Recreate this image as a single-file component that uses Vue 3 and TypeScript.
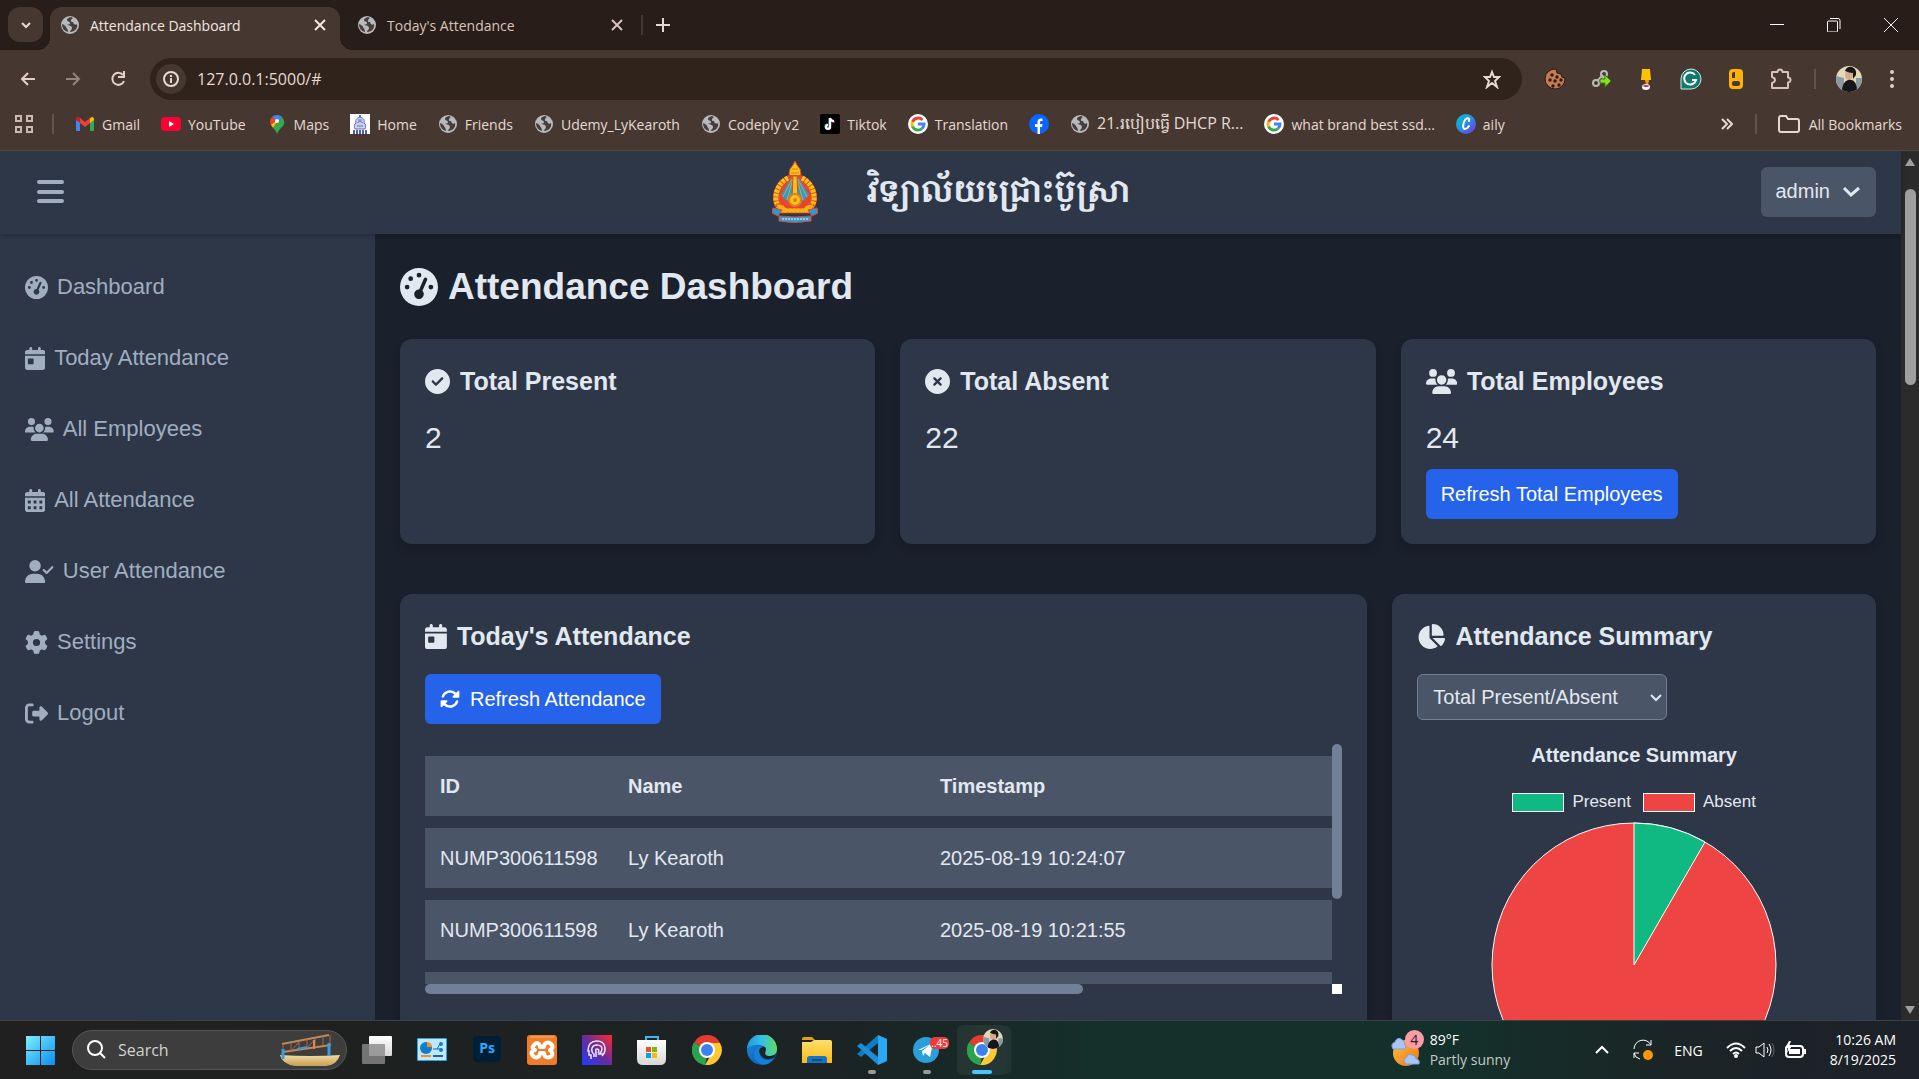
<script setup lang="ts">
import { computed, ref } from 'vue'

interface Glyph { w: number; d: string }
interface Bookmark { icon: string; label: string; lang?: string }
interface AttendanceRow { id: string; name: string; timestamp: string }

const calendarTop = 'M128 0c17.7 0 32 14.3 32 32V64H288V32c0-17.7 14.3-32 32-32s32 14.3 32 32V64h48c26.5 0 48 21.5 48 48v48H0V112C0 85.5 21.5 64 48 64H96V32c0-17.7 14.3-32 32-32z'
const disc = 'M256 512A256 256 0 1 0 256 0a256 256 0 1 0 0 512z'

const glyphs: Record<string, Glyph> = {
  gauge: { w: 512, d: 'M0 256a256 256 0 1 1 512 0A256 256 0 1 1 0 256zM288 96a32 32 0 1 0 -64 0 32 32 0 1 0 64 0zM256 416c35.3 0 64-28.7 64-64c0-17.4-6.9-33.1-18.1-44.6L366 161.7c5.3-12.1-.2-26.3-12.3-31.6s-26.3 .2-31.6 12.3L257.9 288c-.6 0-1.3 0-1.9 0c-35.3 0-64 28.7-64 64s28.7 64 64 64zM176 144a32 32 0 1 0 -64 0 32 32 0 1 0 64 0zM96 288a32 32 0 1 0 0-64 32 32 0 1 0 0 64zm352-32a32 32 0 1 0 -64 0 32 32 0 1 0 64 0z' },
  day: { w: 448, d: calendarTop + 'M0 192H448V464c0 26.5-21.5 48-48 48H48c-26.5 0-48-21.5-48-48V192zm80 64c-8.8 0-16 7.2-16 16v96c0 8.8 7.2 16 16 16h96c8.8 0 16-7.2 16-16V272c0-8.8-7.2-16-16-16H80z' },
  days: { w: 448, d: calendarTop + 'M0 192H448V464c0 26.5-21.5 48-48 48H48c-26.5 0-48-21.5-48-48V192zM64 256v64h64v-64zM192 256v64h64v-64zM320 256v64h64v-64zM64 384v64h64v-64zM192 384v64h64v-64zM320 384v64h64v-64z' },
  users: { w: 640, d: 'M144 0a80 80 0 1 1 0 160A80 80 0 1 1 144 0zM512 0a80 80 0 1 1 0 160A80 80 0 1 1 512 0zM0 298.7C0 239.8 47.8 192 106.7 192h42.7c15.9 0 31 3.5 44.6 9.7c-1.3 7.2-1.9 14.7-1.9 22.3c0 38.2 16.8 72.5 43.3 96c-.2 0-.4 0-.7 0H21.3C9.6 320 0 310.4 0 298.7zM405.3 320c-.2 0-.4 0-.7 0c26.6-23.5 43.3-57.8 43.3-96c0-7.6-.7-15-1.9-22.3c13.6-6.3 28.7-9.7 44.6-9.7h42.7C592.2 192 640 239.8 640 298.7c0 11.8-9.6 21.3-21.3 21.3H405.3zM224 224a96 96 0 1 1 192 0 96 96 0 1 1 -192 0zM128 485.3C128 411.7 187.7 352 261.3 352H378.7C452.3 352 512 411.7 512 485.3c0 14.7-11.9 26.7-26.7 26.7H154.7c-14.7 0-26.7-11.9-26.7-26.7z' },
  userCheck: { w: 640, d: 'M96 128a128 128 0 1 1 256 0A128 128 0 1 1 96 128zM0 482.3C0 383.8 79.8 304 178.3 304h91.4C368.2 304 448 383.8 448 482.3c0 16.4-13.3 29.7-29.7 29.7H29.7C13.3 512 0 498.7 0 482.3zM625 177L497 305c-9.4 9.4-24.6 9.4-33.9 0l-64-64c-9.4-9.4-9.4-24.6 0-33.9s24.6-9.4 33.9 0l47 47L591 143c9.4-9.4 24.6-9.4 33.9 0s9.4 24.6 0 33.9z' },
  gear: { w: 512, d: 'M495.9 166.6c3.2 8.7 .5 18.4-6.4 24.6l-43.3 39.4c1.1 8.3 1.7 16.8 1.7 25.4s-.6 17.1-1.7 25.4l43.3 39.4c6.9 6.2 9.6 15.9 6.4 24.6c-4.4 11.9-9.7 23.3-15.8 34.3l-4.7 8.1c-6.6 11-14 21.4-22.1 31.2c-5.9 7.2-15.7 9.6-24.5 6.8l-55.7-17.7c-13.4 10.3-28.2 18.9-44 25.4l-12.5 57.1c-2 9.1-9 16.3-18.2 17.8c-13.8 2.3-28 3.5-42.5 3.5s-28.7-1.2-42.5-3.5c-9.2-1.5-16.2-8.7-18.2-17.8l-12.5-57.1c-15.8-6.5-30.6-15.1-44-25.4L83.1 425.9c-8.8 2.8-18.6 .3-24.5-6.8c-8.1-9.8-15.5-20.2-22.1-31.2l-4.7-8.1c-6.1-11-11.4-22.4-15.8-34.3c-3.2-8.7-.5-18.4 6.4-24.6l43.3-39.4C64.6 273.1 64 264.6 64 256s.6-17.1 1.7-25.4L22.4 191.2c-6.9-6.2-9.6-15.9-6.4-24.6c4.4-11.9 9.7-23.3 15.8-34.3l4.7-8.1c6.6-11 14-21.4 22.1-31.2c5.9-7.2 15.7-9.6 24.5-6.8l55.7 17.7c13.4-10.3 28.2-18.9 44-25.4l12.5-57.1c2-9.1 9-16.3 18.2-17.8C227.3 1.2 241.5 0 256 0s28.7 1.2 42.5 3.5c9.2 1.5 16.2 8.7 18.2 17.8l12.5 57.1c15.8 6.5 30.6 15.1 44 25.4l55.7-17.7c8.8-2.8 18.6-.3 24.5 6.8c8.1 9.8 15.5 20.2 22.1 31.2l4.7 8.1c6.1 11 11.4 22.4 15.8 34.3zM256 336a80 80 0 1 0 0-160 80 80 0 1 0 0 160z' },
  logout: { w: 512, d: 'M377.9 105.9L500.7 228.7c7.2 7.2 11.3 17.1 11.3 27.3s-4.1 20.1-11.3 27.3L377.9 406.1c-6.4 6.4-15 9.9-24 9.9c-18.7 0-33.9-15.2-33.9-33.9l0-62.1-128 0c-17.7 0-32-14.3-32-32l0-64c0-17.7 14.3-32 32-32l128 0 0-62.1c0-18.7 15.2-33.9 33.9-33.9c9 0 17.6 3.6 24 9.9zM160 96L96 96c-17.7 0-32 14.3-32 32l0 256c0 17.7 14.3 32 32 32l64 0c17.7 0 32 14.3 32 32s-14.3 32-32 32l-64 0c-53 0-96-43-96-96L0 128C0 75 43 32 96 32l64 0c17.7 0 32 14.3 32 32s-14.3 32-32 32z' },
  check: { w: 512, d: disc + 'M369 209L241 337c-9.4 9.4-24.6 9.4-33.9 0l-64-64c-9.4-9.4-9.4-24.6 0-33.9s24.6-9.4 33.9 0l47 47L335 175c9.4-9.4 24.6-9.4 33.9 0s9.4 24.6 0 33.9z' },
  cross: { w: 512, d: disc + 'M175 175c9.4-9.4 24.6-9.4 33.9 0l47 47 47-47c9.4-9.4 24.6-9.4 33.9 0s9.4 24.6 0 33.9l-47 47 47 47c9.4 9.4 9.4 24.6 0 33.9s-24.6 9.4-33.9 0l-47-47-47 47c-9.4 9.4-24.6 9.4-33.9 0s-9.4-24.6 0-33.9l47-47-47-47c-9.4-9.4-9.4-24.6 0-33.9z' },
  pie: { w: 576, d: 'M304 240V16.6c0-9 7-16.6 16-16.6C443.7 0 544 100.3 544 224c0 9-7.6 16-16.6 16H304zM32 272C32 150.7 122.1 50.3 239 34.3c9.2-1.3 17 6.1 17 15.4V288L412.5 444.5c6.7 6.7 6.2 17.7-1.5 23.1C371.8 495.6 323.8 512 272 512C139.5 512 32 404.6 32 272zm526.4 16c9.3 0 16.6 7.8 15.4 17c-7.7 55.9-34.6 105.6-73.9 142.3c-6 5.6-15.4 5.2-21.2-.7L320 288H558.4z' },
  rotate: { w: 512, d: 'M142.9 142.9c-17.5 17.5-30.1 38-37.8 59.8c-5.9 16.7-24.2 25.4-40.8 19.5s-25.4-24.2-19.5-40.8C55.6 150.7 73.2 122 97.6 97.6c87.2-87.2 228.3-87.5 315.8-1L455 55c6.9-6.9 17.2-8.9 26.2-5.2s14.8 12.5 14.8 22.2l0 128c0 13.3-10.7 24-24 24L344 224c-9.7 0-18.5-5.8-22.2-14.8s-1.7-19.3 5.2-26.2l41.1-41.1c-62.6-61.5-163.1-61.2-225.3 1zM16 312c0-13.3 10.7-24 24-24L168 288c9.7 0 18.5 5.8 22.2 14.8s1.7 19.3-5.2 26.2l-41.1 41.1c62.6 61.5 163.1 61.2 225.3-1c17.5-17.5 30.1-38 37.8-59.8c5.9-16.7 24.2-25.4 40.8-19.5s25.4 24.2 19.5 40.8c-10.8 30.6-28.4 59.3-52.9 83.8c-87.2 87.2-228.3 87.5-315.8 1L57 457c-6.9 6.9-17.2 8.9-26.2 5.2S16 449.7 16 440z' },
}

const navItems = [
  { icon: 'gauge', label: 'Dashboard' },
  { icon: 'day', label: 'Today Attendance' },
  { icon: 'users', label: 'All Employees' },
  { icon: 'days', label: 'All Attendance' },
  { icon: 'userCheck', label: 'User Attendance' },
  { icon: 'gear', label: 'Settings' },
  { icon: 'logout', label: 'Logout' },
]

const present = ref(2)
const absent = ref(22)
const total = computed(() => present.value + absent.value)
const summaryMode = ref('total')
const search = ref('')
const address = ref('127.0.0.1:5000/#')

const stats = computed(() => [
  { icon: 'check', label: 'Total Present', value: present.value, action: '' },
  { icon: 'cross', label: 'Total Absent', value: absent.value, action: '' },
  { icon: 'users', label: 'Total Employees', value: total.value, action: 'Refresh Total Employees' },
])

const rows: AttendanceRow[] = [
  { id: 'NUMP300611598', name: 'Ly Kearoth', timestamp: '2025-08-19 10:24:07' },
  { id: 'NUMP300611598', name: 'Ly Kearoth', timestamp: '2025-08-19 10:21:55' },
]

const bookmarks: Bookmark[] = [
  { icon: 'gmail', label: 'Gmail' },
  { icon: 'youtube', label: 'YouTube' },
  { icon: 'maps', label: 'Maps' },
  { icon: 'home', label: 'Home' },
  { icon: 'globe', label: 'Friends' },
  { icon: 'globe', label: 'Udemy_LyKearoth' },
  { icon: 'globe', label: 'Codeply v2' },
  { icon: 'tiktok', label: 'Tiktok' },
  { icon: 'google', label: 'Translation' },
  { icon: 'facebook', label: '' },
  { icon: 'globe', label: '21.របៀបធ្វើ DHCP R...', lang: 'km' },
  { icon: 'google', label: 'what brand best ssd...' },
  { icon: 'canva', label: 'aily' },
]

const extensions = ['cookie', 'chain', 'highlighter', 'grammar', 'mouse', 'puzzle']
const apps = ['taskview', 'panel', 'photoshop', 'xampp', 'face', 'store', 'chrome', 'edge', 'folder', 'vscode', 'telegram', 'profile']
const running = ['vscode', 'telegram']

const radius = 142
const slice = computed(() => {
  const angle = (present.value / total.value) * Math.PI * 2
  const x = 143 + radius * Math.sin(angle)
  const y = 143 - radius * Math.cos(angle)
  return `M143 143V${143 - radius}A${radius} ${radius} 0 0 1 ${x} ${y}Z`
})
</script>

<template>
  <div class="screen">
    <svg class="sprite" width="0" height="0" aria-hidden="true">
      <defs>
        <linearGradient id="canvaFill" x1="0" y1="0" x2="1" y2="1"><stop offset="0" stop-color="#00c4cc" /><stop offset=".5" stop-color="#2a8fe0" /><stop offset="1" stop-color="#7d2ae8" /></linearGradient>
        <linearGradient id="winFill" gradientUnits="userSpaceOnUse" x1="0" y1="0" x2="29" y2="29"><stop offset="0" stop-color="#7df0ff" /><stop offset="1" stop-color="#0a8cf0" /></linearGradient>
        <linearGradient id="faceFill" x1="0" y1="1" x2="1" y2="0"><stop offset="0" stop-color="#1c3cff" /><stop offset=".5" stop-color="#6a2c9c" /><stop offset="1" stop-color="#ff2a2a" /></linearGradient>
        <linearGradient id="edgeTop" x1="0" y1="0" x2="1" y2="0"><stop offset="0" stop-color="#1f9bdc" /><stop offset=".5" stop-color="#35c1e8" /><stop offset="1" stop-color="#5fdc5a" /></linearGradient>
        <linearGradient id="edgeLow" x1="0" y1="0" x2="1" y2="1"><stop offset="0" stop-color="#1b8ee0" /><stop offset="1" stop-color="#0c4c9e" /></linearGradient>
        <linearGradient id="folderFill" x1="0" y1="0" x2="0" y2="1"><stop offset="0" stop-color="#ffdf6b" /><stop offset="1" stop-color="#fcb914" /></linearGradient>
        <linearGradient id="sunFill" x1="0" y1="0" x2="1" y2="1"><stop offset="0" stop-color="#ffc53d" /><stop offset="1" stop-color="#f0701a" /></linearGradient>
        <linearGradient id="whiteFill" x1="0" y1="0" x2="0" y2="1"><stop offset="0" stop-color="#ffffff" /><stop offset="1" stop-color="#d8d8d8" /></linearGradient>
        <linearGradient id="sandFill" x1="0" y1="0" x2="0" y2="1"><stop offset="0" stop-color="#f1dca2" /><stop offset="1" stop-color="#c79f55" /></linearGradient>
      </defs>
      <symbol id="globe" viewBox="0 0 20 20"><circle cx="10" cy="10" r="9" fill="#b4bac0" /><path d="M11 2c-2 1-4 1-4 3s3 1 3 3-2 1-3 2c2 0 5 1 5 3s-2 2-2 4c5 0 8-4 7-8-1 1-2 1-3 0s0-2-2-2-1-3 1-4z" fill="#4a3d38" /><path d="M2 9c2 1 3 1 4 3s2 2 2 5c-4-1-6-4-6-8z" fill="#4a3d38" /></symbol>
      <symbol id="gmail" viewBox="0 0 20 20"><path d="M1 5v11q0 1 1 1h3V8z" fill="#4285f4" /><path d="M19 5v11q0 1-1 1h-3V8z" fill="#34a853" /><path d="M15 4v5l4-3V5q0-2-2-2z" fill="#fbbc04" /><path d="M5 4v5L1 6V5q0-2 2-2z" fill="#c5221f" /><path d="M5 4l5 4 5-4v5l-5 4-5-4z" fill="#ea4335" /></symbol>
      <symbol id="youtube" viewBox="0 0 20 20"><rect y="3" width="20" height="14" rx="4" fill="#ff0033" /><path d="M8 7l5 3-5 3z" fill="#fff" /></symbol>
      <symbol id="maps" viewBox="0 0 20 20"><path d="M10 1a7 7 0 0 0-5 2l5 6 5-6a7 7 0 0 0-5-2z" fill="#4285f4" /><path d="M5 3a7 7 0 0 0-1 8l6-4z" fill="#ea4335" /><path d="M4 11l2 3 6-8-2 0z" fill="#fbbc04" /><path d="M15 3q4 5 1 9c-3 3-4 4-6 8-1-3-2-4-4-6z" fill="#34a853" /><circle cx="10" cy="7" r="2" fill="#fff" /></symbol>
      <symbol id="home" viewBox="0 0 20 20"><rect width="20" height="20" fill="#fff" /><path d="M10 1v3" stroke="#6470b8" stroke-width="2" /><path d="M10 3c4 1 5 4 4 6 2 1 2 4 1 6H5c-1-2-1-5 1-6-1-2 0-5 4-6z" fill="#cdd2ee" stroke="#6470b8" /><path d="M8 6h4M7 9l3-2 3 2M7 12h6" fill="none" stroke="#6470b8" /><path d="M3 17h14M3 19h14" stroke="#4d5bb0" stroke-dasharray="2 1" stroke-width="2" /></symbol>
      <symbol id="tiktok" viewBox="0 0 20 20"><rect width="20" height="20" rx="2" fill="#000" /><path d="M10.500 4.500v8.500a2 2 0 1 1-2-2M10.500 5q1 3 4 3" fill="none" stroke="#fe2c55" stroke-width="2" /><path d="M9.500 4v8.500a2 2 0 1 1-2-2M9.500 4q1 3 4 3" fill="none" stroke="#25f4ee" stroke-width="2" /><path d="M10 4v9a2 2 0 1 1-2-2M10 4q1 3 4 3" fill="none" stroke="#fff" stroke-width="2" /></symbol>
      <symbol id="google" viewBox="0 0 20 20"><circle cx="10" cy="10" r="10" fill="#fff" /><g fill="none" stroke-width="3"><path d="M14.500 6a6 6 0 0 0-10 2" stroke="#ea4335" /><path d="M4.500 7.500a6 6 0 0 0 0 5" stroke="#fbbc04" /><path d="M4.500 12.500a6 6 0 0 0 9.500 2" stroke="#34a853" /><path d="M10 10h6a6 6 0 0 1-2 4.500" stroke="#4285f4" /></g></symbol>
      <symbol id="facebook" viewBox="0 0 20 20"><circle cx="10" cy="10" r="10" fill="#0866ff" /><path d="M8.500 20v-7H6v-3h2.500V8c0-3 2-4 5-3.500V7H12q-1 0-1 1v2h2.500l-.5 3h-2v7z" fill="#fff" /></symbol>
      <symbol id="canva" viewBox="0 0 20 20"><circle cx="10" cy="10" r="10" fill="url(#canvaFill)" /><path d="M13 7c1-3-2-4-4-1s-3 9 0 9q2 0 4-3" fill="none" stroke="#fff" stroke-width="2" stroke-linecap="round" /></symbol>
      <symbol id="cookie" viewBox="0 0 24 24"><path d="M12 2a10 10 0 1 0 9 9l-3-1-1-3-4-1z" fill="#c67c4e" stroke="#2a1a14" /><g fill="#2a1a14"><circle cx="8" cy="8" r="1.700" /><circle cx="13" cy="10" r="1.700" /><circle cx="6" cy="13" r="1.700" /><circle cx="11" cy="14" r="1.700" /><circle cx="17" cy="13" r="1.700" /><circle cx="9" cy="19" r="1.700" /><circle cx="15" cy="18" r="1.700" /></g></symbol>
      <symbol id="chain" viewBox="0 0 24 24"><g fill="none" stroke="#b9b9b9" stroke-width="2"><circle cx="7" cy="16" r="3" /><circle cx="15" cy="7" r="3" /><path d="M9 13l5-5M12 16l3-6" /></g><path d="M11 12h5V8l6 6-6 6v-4h-5z" fill="#86e01e" stroke="#3f7a0a" /></symbol>
      <symbol id="highlighter" viewBox="0 0 24 24"><path d="M8 2h8l1 11H7z" fill="#ffc107" /><path d="M11 13h4l-1 5h-2z" fill="#e8a400" /><ellipse cx="12" cy="20" rx="4" ry="3" fill="#fff" /><ellipse cx="12" cy="19" rx="3" ry="1" fill="#e8175d" /></symbol>
      <symbol id="grammar" viewBox="0 0 24 24"><path d="M2 22V12a10 10 0 1 1 10 10z" fill="#0f7a6c" stroke="#cfe8e4" /><path d="M16 8a6 6 0 1 0 1 5h-4" fill="none" stroke="#fff" stroke-width="2" /></symbol>
      <symbol id="mouse" viewBox="0 0 24 24"><rect x="5" y="2" width="14" height="20" rx="4" fill="#ffb300" /><rect x="8" y="14" width="8" height="5" rx="2" fill="#463831" /><path d="M8 7q0-2 2-2h1v6H8z" fill="#463831" /></symbol>
      <symbol id="puzzle" viewBox="0 0 24 24"><path d="M3 5h5.500a2.500 2.500 0 0 1 5 0H19v5.500a2.500 2.500 0 0 1 0 5V21H3v-5q3-1 3-3t-3-3z" fill="none" stroke="#d8c2b8" stroke-width="2" stroke-linejoin="round" /></symbol>
      <symbol id="avatar" viewBox="0 0 26 26"><clipPath id="avatarClip"><circle cx="13" cy="13" r="13" /></clipPath><g clip-path="url(#avatarClip)"><rect width="26" height="26" fill="#e2d8b6" /><path d="M0 10l8 2v14H0zM20 12h6v14h-6z" fill="#8b99a3" /><ellipse cx="13" cy="9" rx="4" ry="5" fill="#d7a98b" /><path d="M9 5q2-5 7-4 5 2 4 8l-3 4V7q-4 0-8-2z" fill="#17181b" /><path d="M6 26q0-10 6-12 9-2 9 12z" fill="#15161b" /></g></symbol>
      <symbol id="taskview" viewBox="0 0 30 30"><rect x="7" y="1" width="23" height="20" rx="1" fill="url(#whiteFill)" /><rect y="9" width="23" height="20" rx="1" fill="#8a8a8a" fill-opacity=".8" /></symbol>
      <symbol id="panel" viewBox="0 0 30 30"><rect y="3" width="30" height="23" rx="1" fill="#2aa3e8" /><rect x="1" y="4" width="28" height="21" fill="#bfe9fb" /><circle cx="9" cy="13" r="6" fill="#0d7fd0" /><path d="M10 12V7a5 5 0 0 1 5 5z" fill="#ff8c1a" /><path d="M16 14h4l3-5h2M20 14h5" fill="none" stroke="#1665a8" stroke-width="1" /><circle cx="24" cy="9" r="2" fill="#0d7fd0" /><circle cx="24" cy="15" r="2" fill="#0d7fd0" /><path d="M4 21h10" stroke="#ff8c1a" stroke-width="2" /><path d="M16 21h10" stroke="#1665a8" stroke-width="2" /></symbol>
      <symbol id="photoshop" viewBox="0 0 30 30"><rect x="1" y="1" width="28" height="26" rx="4" fill="#001e36" /></symbol>
      <symbol id="xampp" viewBox="0 0 30 30"><rect width="30" height="30" rx="3" fill="#f07c28" /><path d="M3 2h24" stroke="#f9b27c" /><path d="M7 10c3-4 6-1 6 2h4c0-4 4-6 7-3s1 5-1 6c3 2 3 6 0 7s-6 0-6-4h-4c0 4-4 6-7 3s-1-5 2-6c-3-1-3-3-1-5z" fill="none" stroke="#fff" stroke-width="4" stroke-linejoin="round" /></symbol>
      <symbol id="face" viewBox="0 0 30 30"><rect width="30" height="30" fill="url(#faceFill)" /><path d="M9 24v-4H7v-4H6q0-10 9-10c9 0 10 10 5 15M12 22v-3q-3-2-2-6c2-4 10-4 10 1 0 3-2 4-3 5h5M14 22v-5q-1-3 1-3 3 0 1 4" fill="none" stroke="#f0e6ff" stroke-width="1.500" /></symbol>
      <symbol id="store" viewBox="0 0 30 30"><path d="M9 7V2h12v5" fill="none" stroke="#38b6f5" stroke-width="2" /><path d="M0 5h29v19q0 6-6 6H6q-6 0-6-6z" fill="url(#whiteFill)" /><path d="M9 12h5v5H9z" fill="#f25022" /><path d="M15 12h5v5h-5z" fill="#7fba00" /><path d="M9 18h5v5H9z" fill="#00a4ef" /><path d="M15 18h5v5h-5z" fill="#ffb900" /></symbol>
      <symbol id="chrome" viewBox="0 0 30 30"><path d="M15 15L2 7.500A15 15 0 0 1 28 7.500z" fill="#e33b2e" /><path d="M15 15l-2 15A15 15 0 0 1 2 7.500z" fill="#2ba24c" /><path d="M15 15V8h13A15 15 0 0 1 13 30l7-12z" fill="#fcc934" /><path d="M2 7.500L9 19l6 3-2 8A15 15 0 0 1 2 7.500z" fill="#2ba24c" /><circle cx="15" cy="15" r="8" fill="#fff" /><circle cx="15" cy="15" r="6" fill="#3b82ec" /></symbol>
      <symbol id="edge" viewBox="0 0 30 30"><circle cx="15" cy="15" r="15" fill="url(#edgeLow)" /><path d="M0 14A15 15 0 0 1 30 14c0 5-4 7-8 7s-5-1-4-3 1-7-5-8S1 12 0 14z" fill="url(#edgeTop)" /><path d="M12 15c0-4 7-5 7-1 0 2-2 4 0 6s8 1 10-1c-1 4-4 5-8 5-5 0-9-4-9-9z" fill="#1b2424" /><path d="M7 21c0-7 5-11 9-9-6 1-5 9 0 12 4 2 8 1 11-1-4 7-11 8-15 5s-5-5-5-7z" fill="#1480d8" /></symbol>
      <symbol id="folder" viewBox="0 0 30 30"><path d="M0 4q0-2 2-2h8l3 3H0z" fill="#e0a010" /><path d="M0 7h9l3-2h16q2 0 2 2v21H0z" fill="url(#folderFill)" /><path d="M5 28v-4q0-3 3-3h14q3 0 3 3v4z" fill="#1473c4" /><path d="M10 25h10" stroke="#0c4d8c" stroke-width="2" /></symbol>
      <symbol id="vscode" viewBox="0 0 30 30"><path d="M21 0l9 4v22l-9 4z" fill="#2aa9f2" /><path d="M21 0v8L4 22l-4-3z" fill="#0d7dc6" /><path d="M0 11l4-3 17 14v8z" fill="#1a8ddb" /></symbol>
      <symbol id="telegram" viewBox="0 0 30 30"><circle cx="14" cy="15" r="13" fill="#2a9fda" /><path d="M6 15l15-7-3 14-5-4-2 3-1-5 8-6-9 5z" fill="#fff" /></symbol>
      <symbol id="profile" viewBox="0 0 30 30"><use href="#chrome" width="30" height="30" /></symbol>
    </svg>

    <header class="tabstrip">
      <button class="tab-search" aria-label="Search tabs"><svg width="12" height="12" viewBox="0 0 12 12"><path d="M2 4l4 4 4-4" class="line w2" /></svg></button>
      <div class="tab active">
        <svg width="20" height="20"><use href="#globe" /></svg>
        <span>Attendance Dashboard</span>
        <button aria-label="Close tab"><svg width="12" height="12" viewBox="0 0 12 12"><path d="M1 1l10 10M11 1L1 11" class="line w2" /></svg></button>
      </div>
      <div class="tab">
        <svg width="20" height="20"><use href="#globe" /></svg>
        <span>Today's Attendance</span>
        <button aria-label="Close tab"><svg width="12" height="12" viewBox="0 0 12 12"><path d="M1 1l10 10M11 1L1 11" class="line w2" /></svg></button>
      </div>
      <i class="divider tab-divider"></i>
      <button class="new-tab" aria-label="New tab"><svg width="14" height="14" viewBox="0 0 14 14"><path d="M7 0v14M0 7h14" class="line w2" /></svg></button>
      <div class="window-buttons">
        <button aria-label="Minimize"><svg width="14" height="14" viewBox="0 0 14 14"><path d="M0 6.500h14" class="line" /></svg></button>
        <button aria-label="Restore"><svg width="14" height="14" viewBox="0 0 14 14"><path d="M.5 4q0-1 1-1h8q1 0 1 1v9q0 1-1 1h-8q-1 0-1-1zM3 .5h8q2 0 2 2V11" class="line" /></svg></button>
        <button aria-label="Close"><svg width="14" height="14" viewBox="0 0 14 14"><path d="M0 0l14 14M14 0L0 14" class="line" /></svg></button>
      </div>
    </header>

    <div class="toolbar">
      <button class="tool" aria-label="Back"><svg width="20" height="20" viewBox="0 0 20 20"><path d="M17 10H4M10 4l-6 6 6 6" class="line w2" /></svg></button>
      <button class="tool dim" aria-label="Forward"><svg width="20" height="20" viewBox="0 0 20 20"><path d="M3 10h13M10 4l6 6-6 6" class="line w2" /></svg></button>
      <button class="tool" aria-label="Reload"><svg width="20" height="20" viewBox="0 0 20 20"><path d="M15 6a6 6 0 1 0 1 6M16 2v6h-6" class="line w2" /></svg></button>
      <div class="omnibox">
        <span class="site-info"><svg width="18" height="18" viewBox="0 0 18 18"><circle cx="9" cy="9" r="7" class="line w2" /><path d="M9 8v5M9 5v2" class="line w2" /></svg></span>
        <input v-model="address" aria-label="Address" />
        <button aria-label="Bookmark this page"><svg width="20" height="20" viewBox="0 0 20 20"><path d="M10 3l2 5h5l-4 4 2 6-5-4-5 4 2-6-4-4h5z" class="line w2" /></svg></button>
      </div>
      <div class="extensions">
        <button v-for="e in extensions" :key="e" :aria-label="e"><svg width="24" height="24"><use :href="'#' + e" /></svg></button>
      </div>
      <i class="divider"></i>
      <button class="avatar" aria-label="Profile"><svg width="26" height="26"><use href="#avatar" /></svg></button>
      <button class="kebab" aria-label="Menu"><svg width="4" height="18" viewBox="0 0 4 18" fill="#e3cfc6"><circle cx="2" cy="2" r="2" /><circle cx="2" cy="9" r="2" /><circle cx="2" cy="16" r="2" /></svg></button>
    </div>

    <nav class="bookmarks" aria-label="Bookmarks">
      <button class="apps-grid" aria-label="Apps"><svg width="18" height="18" viewBox="0 0 18 18"><path d="M1 1h5v5H1zM12 1h5v5h-5zM1 12h5v5H1zM12 12h5v5h-5z" class="line w2" /></svg></button>
      <i class="divider"></i>
      <a v-for="b in bookmarks" :key="b.label" href="#" :lang="b.lang"><svg width="20" height="20"><use :href="'#' + b.icon" /></svg><span v-if="b.label">{{ b.label }}</span></a>
      <button class="more" aria-label="More bookmarks"><svg width="12" height="12" viewBox="0 0 12 12"><path d="M1 1l5 5-5 5M6 1l5 5-5 5" class="line w2" /></svg></button>
      <i class="divider"></i>
      <a class="all" href="#"><svg width="22" height="18" viewBox="0 0 22 18"><path d="M1 3q0-2 2-2h5l2 3h9q2 0 2 2v9q0 2-2 2H3q-2 0-2-2z" class="line w2" /></svg><span>All Bookmarks</span></a>
    </nav>

    <div class="viewport">
      <div class="page">
        <header class="page-header">
          <button class="burger" aria-label="Toggle sidebar"><svg width="27" height="24" viewBox="0 0 27 24" fill="#a0aec0"><rect width="27" height="4" rx="2" /><rect y="10" width="27" height="4" rx="2" /><rect y="19" width="27" height="4" rx="2" /></svg></button>
          <div class="brand">
            <svg class="emblem" width="46" height="62" viewBox="0 0 46 62">
              <path d="M23 0l2 4 3 4 1 5-2 4h-8l-2-4 1-5 3-4z" fill="#f8c515" stroke="#e8452c" />
              <path d="M20 8h6M19 12h8" stroke="#e87a1c" />
              <path d="M17 14C7 17 1 27 1 37q0 8 6 14h32q6-6 6-14c0-10-6-20-16-23z" fill="#e8452c" />
              <path d="M16 17C8 21 3 30 4 40q2 6 7 9M30 17c8 4 13 13 12 23q-2 6-7 9" fill="none" stroke="#f8c515" stroke-width="5" stroke-dasharray="3 1" />
              <path d="M20 16L9 34l7 7h14l7-7-11-18z" fill="#1da0dc" />
              <path d="M20 18l-9 18M21 18l-6 21M26 18l9 18M25 18l6 21" stroke="#f59a1c" stroke-width="1" />
              <path d="M21 15h4l1 24h-6z" fill="#f8c515" stroke="#e8452c" />
              <circle cx="23" cy="39" r="6" fill="#f8c515" stroke="#e87a1c" stroke-width="2" /><circle cx="23" cy="39" r="2" fill="#e87a1c" />
              <path d="M4 43q8 0 10 4h18q2-4 10-4l-3 9H7z" fill="#f8b015" stroke="#e8452c" stroke-dasharray="3 1" />
              <path d="M1 47l9 2-4 6-6-3zM45 47l-9 2 4 6 6-3z" fill="#1da0dc" stroke="#e8452c" />
              <path d="M7 55q16 2 32 0v5q-16 3-32 0z" fill="#27a3dc" stroke="#e8452c" />
              <path d="M10 58h26" stroke="#e8f4fa" stroke-dasharray="2 1" />
            </svg>
            <span class="school" lang="km">វិទ្យាល័យជ្រោះប៊ូស្រា</span>
          </div>
          <button class="user">admin<svg width="19" height="12" viewBox="0 0 19 12"><path d="M2 2l7 7 8-7" class="line w3" /></svg></button>
        </header>

        <div class="body">
          <aside class="sidebar">
            <a v-for="n in navItems" :key="n.label" href="#"><svg class="glyph" :viewBox="`0 0 ${glyphs[n.icon].w} 512`"><path :d="glyphs[n.icon].d" /></svg><span>{{ n.label }}</span></a>
          </aside>

          <main class="main">
            <h1><svg class="glyph" viewBox="0 0 512 512"><path :d="glyphs.gauge.d" /></svg>Attendance Dashboard</h1>

            <section class="stats">
              <article v-for="s in stats" :key="s.label" class="card">
                <h2><svg class="glyph" :viewBox="`0 0 ${glyphs[s.icon].w} 512`"><path :d="glyphs[s.icon].d" /></svg>{{ s.label }}</h2>
                <p>{{ s.value }}</p>
                <button v-if="s.action" class="primary">{{ s.action }}</button>
              </article>
            </section>

            <section class="panels">
              <article class="card">
                <h2><svg class="glyph" viewBox="0 0 448 512"><path :d="glyphs.day.d" /></svg>Today's Attendance</h2>
                <button class="primary"><svg class="glyph" viewBox="0 0 512 512"><path :d="glyphs.rotate.d" /></svg>Refresh Attendance</button>
                <div class="scroller">
                  <div class="clip">
                    <table>
                      <colgroup><col class="c-id" /><col class="c-name" /><col /></colgroup>
                      <thead><tr><th>ID</th><th>Name</th><th>Timestamp</th></tr></thead>
                      <tbody>
                        <tr v-for="r in rows" :key="r.timestamp"><td>{{ r.id }}</td><td>{{ r.name }}</td><td>{{ r.timestamp }}</td></tr>
                        <tr><td></td><td></td><td></td></tr>
                      </tbody>
                    </table>
                  </div>
                  <div class="track-y"><i></i></div>
                  <div class="track-x"><i></i></div>
                  <div class="corner"></div>
                </div>
              </article>

              <article class="card">
                <h2><svg class="glyph" viewBox="0 0 576 512"><path :d="glyphs.pie.d" /></svg>Attendance Summary</h2>
                <div class="select">
                  <select v-model="summaryMode" aria-label="Summary type"><option value="total">Total Present/Absent</option></select>
                  <svg width="12" height="8" viewBox="0 0 12 8"><path d="M1 1l5 5 5-5" class="line w2" /></svg>
                </div>
                <figure>
                  <figcaption>Attendance Summary</figcaption>
                  <ul><li><i class="green"></i>Present</li><li><i class="red"></i>Absent</li></ul>
                  <svg width="286" height="286" viewBox="0 0 286 286" stroke="#fff"><circle cx="143" cy="143" :r="radius" fill="#ef4444" /><path :d="slice" fill="#10b981" stroke-linejoin="bevel" /></svg>
                </figure>
              </article>
            </section>
          </main>
        </div>
      </div>
      <div class="scrollbar">
        <svg width="12" height="10" viewBox="0 0 12 10"><path d="M6 1l5 8H1z" /></svg>
        <i></i>
        <svg width="12" height="10" viewBox="0 0 12 10"><path d="M6 9l5-8H1z" /></svg>
      </div>
    </div>

    <footer class="taskbar">
      <button class="start" aria-label="Start"><svg width="29" height="29" viewBox="0 0 29 29"><path d="M0 0h14v14H0zM15 0h14v14H15zM0 15h14v14H0zM15 15h14v14H15z" fill="url(#winFill)" /></svg></button>
      <label class="search">
        <svg width="20" height="20" viewBox="0 0 20 20"><circle cx="9" cy="8" r="7" class="line w2" /><path d="M14 13l5 5" class="line w2" /></svg>
        <input v-model="search" placeholder="Search" aria-label="Search" />
        <svg width="62" height="32" viewBox="0 0 62 32">
          <path d="M1 21q30 2 60 0-3 10-14 11H16Q3 30 1 21z" fill="url(#sandFill)" />
          <path d="M3 10L50 1M4 18l48-7" fill="none" stroke="#c4875a" stroke-width="2" />
          <path d="M4 10v8M12 8v9M20 7v9M28 5v9M36 4v9M44 2v9M51 1v10M12 17l8-9M28 14l8-9" stroke="#a06a44" />
          <path d="M35 6v9" stroke="#d98b4e" stroke-width="2" /><path d="M18 15l10-2" stroke="#3a96dc" stroke-width="2" />
          <path d="M4 15v10M50 9v13" stroke="#3a9ce4" stroke-width="3" />
        </svg>
      </label>
      <div class="apps">
        <button v-for="a in apps" :key="a" :class="{ focused: a === 'profile', running: running.includes(a) }" :aria-label="a">
          <svg width="30" height="30"><use :href="'#' + a" /></svg>
          <b v-if="a === 'photoshop'" class="ps">Ps</b>
          <b v-if="a === 'telegram'" class="count">..45</b>
          <svg v-if="a === 'profile'" class="mini" width="20" height="20" viewBox="0 0 26 26"><use href="#avatar" width="26" height="26" /></svg>
        </button>
      </div>
      <div class="weather">
        <svg width="32" height="36" viewBox="0 0 32 36"><circle cx="15" cy="21" r="13" fill="url(#sunFill)" /><path d="M2 17q-3-5 2-7 2-5 6-3 4 2 4 6 2 4-2 4zM15 32q-4-4 0-6 2-5 6-3 3 0 4 4 4 0 3 5z" fill="#a9c6f5" stroke="#7aa2e6" /></svg>
        <b>4</b>
        <p>89°F<span>Partly sunny</span></p>
      </div>
      <div class="tray">
        <svg width="16" height="10" viewBox="0 0 16 10"><path d="M2 8l6-6 6 6" class="line w2" /></svg>
        <svg width="22" height="24" viewBox="0 0 22 24"><path d="M2 11a9 9 0 0 1 17-4M19 2v5h-5M8 21q-5-1-6-6M2 20v-5h5" class="line" /><circle cx="16" cy="17" r="5" fill="#ff9500" /></svg>
        <span>ENG</span>
        <svg class="wifi" width="20" height="16" viewBox="0 0 20 16"><path d="M1 6q9-9 18 0M4 9q6-6 12 0M7 12q3-3 6 0" class="line w2" /><circle cx="10" cy="14" r="2" fill="#fff" /></svg>
        <svg class="sound" width="20" height="18" viewBox="0 0 20 18"><path d="M1 6h3l5-4v14l-5-4H1zM12 6q2 3 0 6M14 3q4 6 0 12" class="line" /><path d="M17 2q4 7 0 14" class="line faint" /></svg>
        <svg class="battery" width="21" height="18" viewBox="0 0 21 18"><rect x="1" y="5" width="17" height="11" rx="3" class="line w2" /><path d="M4 8h11v5H4z" fill="#fff" /><path d="M20 8v5" class="line w2" /><path d="M4 0L0 7h3L2 12l5-7H4l2-5z" fill="#fff" /></svg>
        <p class="clock">10:26 AM<span>8/19/2025</span></p>
      </div>
    </footer>
  </div>
</template>

<style>
body { margin: 0; overflow: hidden; background: #1a202c; }
</style>

<style scoped>
* { box-sizing: border-box; margin: 0; padding: 0; }
.screen { display: flex; flex-direction: column; height: 100vh; overflow: hidden; font-family: "Open Sans", "Noto Sans", sans-serif; font-size: 14px; color: #e6d9d2; }
button, input, select { font: inherit; color: inherit; background: none; border: 0; outline: 0; }
button { display: flex; align-items: center; justify-content: center; flex: none; }
a { color: inherit; text-decoration: none; }
svg { flex: none; display: block; }
.sprite { position: absolute; }
.line { fill: none; stroke: currentColor; }
.w2 { stroke-width: 2; }
.w3 { stroke-width: 3; }
.faint { opacity: .3; }
.divider { flex: none; width: 2px; height: 20px; background: #65534a; }

.tabstrip { display: flex; flex: none; height: 50px; padding: 7px 0 0 8px; background: #281d18; }
.tab-search { width: 35px; height: 35px; margin-right: 7px; border-radius: 12px; background: #463831; }
.tab { position: relative; display: flex; align-items: center; width: 290px; padding: 0 14px 7px 10px; color: #d9c3b9; }
.tab span { flex: 1; margin-left: 10px; white-space: nowrap; }
.tab + .tab { padding: 0 7px 7px 17px; }
.tab.active { color: #f1e6e0; background: #463831; border-radius: 12px 12px 0 0; }
.tab.active::before, .tab.active::after { content: ""; position: absolute; bottom: 0; width: 12px; height: 12px; }
.tab.active::before { right: 100%; background: radial-gradient(circle at 0 0, transparent 12px, #463831 12px); }
.tab.active::after { left: 100%; background: radial-gradient(circle at 100% 0, transparent 12px, #463831 12px); }
.tab-divider { margin: 8px 0 0 11px; background: #463831; }
.new-tab { width: 40px; height: 36px; }
.window-buttons { display: flex; margin-left: auto; color: #fff; }
.window-buttons button { width: 57px; height: 36px; }

.toolbar { display: flex; align-items: center; flex: none; height: 50px; padding: 8px 11px 0 5px; background: #463831; }
.tool { width: 45px; color: #e3cfc6; }
.dim { opacity: .5; }
.omnibox { display: flex; align-items: center; flex: 1; height: 42px; margin-left: 10px; padding: 0 20px 0 6px; border-radius: 21px; background: #30231c; }
.site-info { display: flex; align-items: center; justify-content: center; width: 30px; height: 30px; border-radius: 15px; background: #463831; }
.omnibox input { flex: 1; margin-left: 11px; font-size: 16px; }
.extensions { display: flex; margin: 0 11px; }
.extensions button { width: 45px; }
.avatar { margin-left: 20px; }
.kebab { width: 32px; margin-left: 14px; }

.bookmarks { display: flex; align-items: center; flex: none; height: 51px; padding: 0 17px 2px 15px; white-space: nowrap; background: #463831; border-bottom: 1px solid #54463e; }
.bookmarks a { display: flex; align-items: center; gap: 7px; margin-left: 21px; }
.bookmarks a:lang(km) { font-size: 16px; }
.apps-grid { margin-right: 19px; color: #cbbab1; }
.more { margin: 0 22px 0 auto; }
.bookmarks .all { gap: 9px; }

.viewport { display: flex; flex: 1; min-height: 0; overflow: hidden; }
.page { flex: 1; min-width: 0; font-family: "Liberation Sans", Arial, sans-serif; font-size: 20px; color: #e2e8f0; }
.page-header { position: relative; z-index: 1; display: flex; align-items: center; justify-content: space-between; height: 83px; padding: 0 25px 2px 37px; background: #2d3748; box-shadow: 0 2px 5px rgba(0, 0, 0, .2); }
.brand { display: flex; align-items: center; gap: 48px; margin-left: 78px; }
.school { padding-bottom: 4px; font-family: "Khmer OS Muol Light", "Noto Serif Khmer", "Noto Sans Khmer", "Liberation Sans", sans-serif; font-size: 31px; font-weight: 700; line-height: 56px; white-space: nowrap; }
.user { gap: 12px; height: 50px; padding: 0 15px; border-radius: 6px; background: #4a5568; }

.body { display: flex; }
.sidebar { flex: none; width: 375px; min-height: 100vh; padding: 30px 25px; background: #2d3748; color: #a0aec0; font-size: 22px; box-shadow: 2px 0 5px rgba(0, 0, 0, .2); }
.sidebar a { display: flex; align-items: center; gap: 9px; height: 46px; margin-bottom: 25px; }
.sidebar .glyph { height: 23px; }
.glyph { height: 1em; fill: currentColor; fill-rule: evenodd; }
.main { flex: 1; min-width: 0; padding: 25px; background: #1a202c; }
h1 { display: flex; align-items: center; gap: 10px; height: 55px; margin-bottom: 25px; font-size: 37px; }
h1 .glyph { height: 38px; }
h2 { display: flex; align-items: center; gap: 10px; height: 35px; font-size: 25px; }
.card { min-width: 0; padding: 25px; border-radius: 12px; background: #2d3748; box-shadow: 0 5px 8px rgba(0, 0, 0, .15); }
.stats { display: grid; grid-template-columns: repeat(3, 1fr); gap: 25px; height: 205px; margin-bottom: 50px; }
.stats p { margin: 16px 0 9px; font-size: 30px; line-height: 45px; }
.primary { gap: 10px; height: 50px; padding: 0 15px; border-radius: 6px; background: #2563eb; color: #fff; }
.panels { display: grid; grid-template-columns: 2fr 1fr; gap: 25px; }
.panels h2 { margin-bottom: 20px; }

.scroller { display: grid; grid-template: 240px 10px / 1fr 10px; margin-top: 20px; }
.clip { min-width: 0; overflow: hidden; }
table { width: 1250px; table-layout: fixed; border-collapse: separate; border-spacing: 0 12px; }
.c-id { width: 188px; }
.c-name { width: 312px; }
th, td { height: 60px; padding: 0 15px; text-align: left; background: #4a5568; }
.track-y i { display: block; height: 155px; border-radius: 5px; background: #718096; }
.track-x { grid-row: 2; }
.track-x i { display: block; width: 658px; height: 10px; border-radius: 5px; background: #718096; }
.corner { background: #fff; }

.select { position: relative; width: 250px; }
.select select { appearance: none; width: 100%; height: 46px; padding: 0 15px; border: 1px solid #718096; border-radius: 6px; background: #4a5568; }
.select svg { position: absolute; right: 5px; top: 20px; pointer-events: none; }
figure { display: flex; flex-direction: column; align-items: center; margin-top: 20px; }
figcaption { font-weight: 700; line-height: 30px; }
ul { display: flex; gap: 12px; height: 24px; margin: 20px 0 8px; list-style: none; font-size: 17px; line-height: 24px; }
li { display: flex; align-items: center; gap: 8px; }
li i { width: 52px; height: 19px; border: 1px solid #fff; }
.green { background: #10b981; }
.red { background: #ef4444; }

.scrollbar { display: flex; flex-direction: column; align-items: center; flex: none; width: 18px; padding: 6px 0 5px; background: #2b2b2b; }
.scrollbar svg { fill: #9f9f9f; }
.scrollbar i { width: 11px; height: 196px; margin: 22px 0 auto; border-radius: 6px; background: #9f9f9f; }

.taskbar { display: flex; align-items: center; flex: none; height: 59px; border-top: 1px solid #3d4241; background: linear-gradient(90deg, #202020 0, #1e2121 25%, #1b2425 45%, #14302a 58%, #14302a 76%, #1b2426 88%, #1d212a); color: #fff; font-size: 14px; }
.start { margin: 0 17px 0 26px; }
.search { display: flex; align-items: center; width: 275px; height: 40px; padding: 0 5px 0 13px; border: 1px solid #555; border-radius: 20px; background: #3d3d3d; }
.search input { flex: 1; min-width: 0; margin-left: 12px; font-size: 16px; }
.search input::placeholder { color: #d2d2d2; opacity: 1; }
.apps { display: flex; gap: 5px; margin-left: 5px; }
.apps button { position: relative; width: 50px; height: 50px; border-radius: 6px; }
.focused { background: rgba(255, 255, 255, .06); box-shadow: 5px 0 0 -1px rgba(255, 255, 255, .05); }
.running::after, .focused::after { content: ""; position: absolute; bottom: 1px; width: 8px; height: 4px; border-radius: 2px; background: #9a9a9a; }
.focused::after { width: 20px; background: #4cc2ff; }
.ps { position: absolute; top: 13px; color: #31a8ff; font-size: 14px; line-height: 20px; }
.count { position: absolute; top: 12px; right: 3px; padding: 0 1px; border-radius: 5px; background: #f03a3a; font-size: 10px; line-height: 12px; font-weight: 400; }
.mini { position: absolute; top: 4px; right: 4px; }
.weather { position: relative; display: flex; align-items: center; gap: 7px; margin-left: auto; }
.weather b { position: absolute; top: 0; left: 14px; width: 19px; border-radius: 10px; background: #ff9ba5; color: #222; font-size: 14px; line-height: 19px; font-weight: 400; text-align: center; }
.weather p, .clock { line-height: 20px; white-space: nowrap; }
.weather span, .clock span { display: block; }
.weather span { color: #c4c8c7; }
.tray { display: flex; align-items: center; margin: 0 23px 0 84px; }
.tray > svg:nth-child(2) { margin: 0 20px 0 22px; }
.wifi { margin-left: 23px; }
.sound { margin-left: 9px; }
.battery { margin: 0 24px 0 10px; }
.clock { text-align: right; }
</style>
